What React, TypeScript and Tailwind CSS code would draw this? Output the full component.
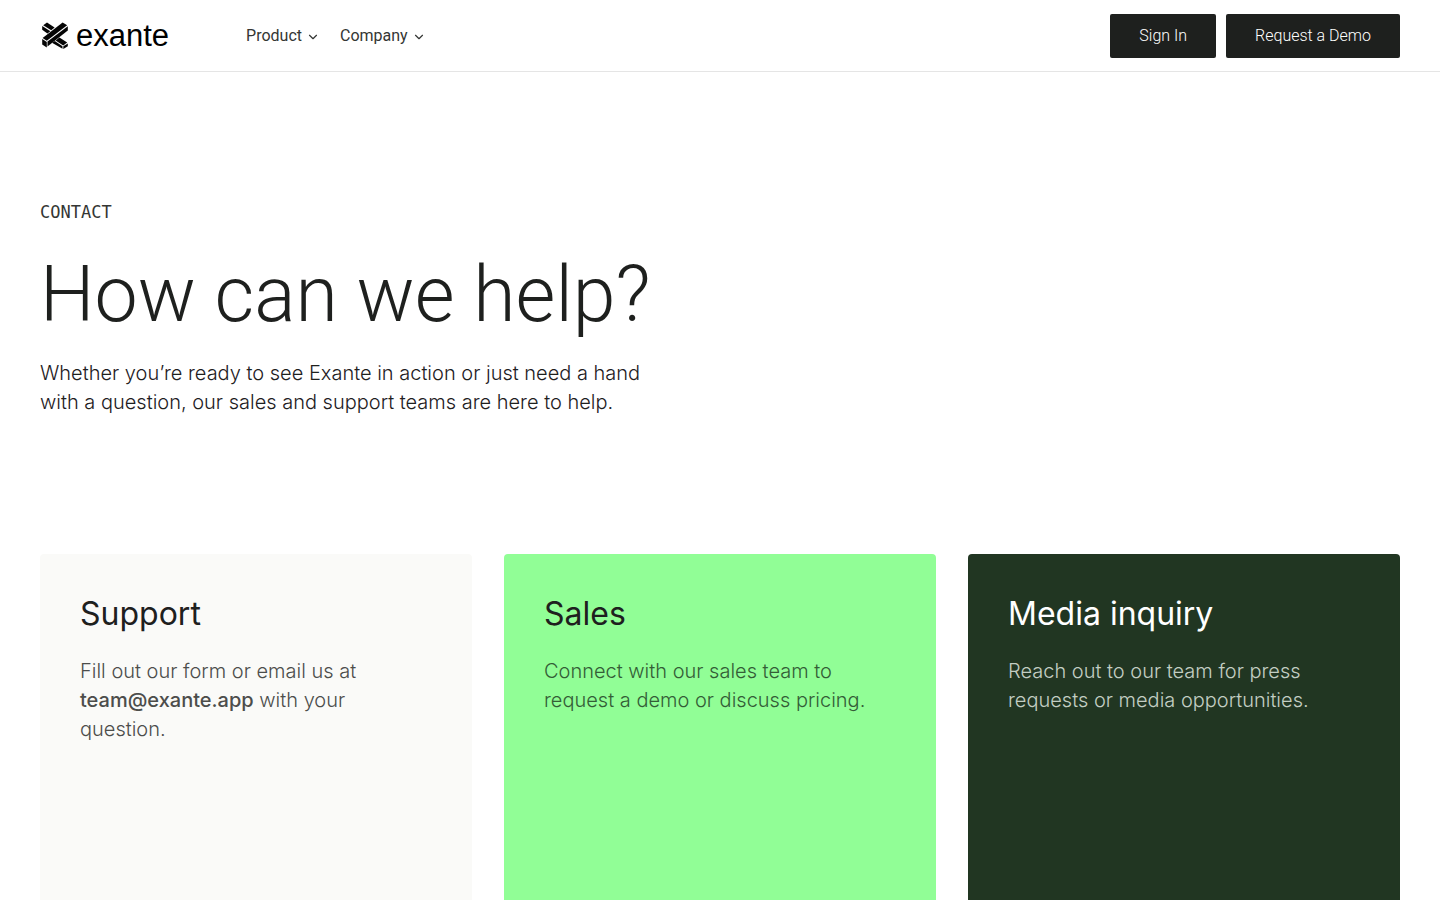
import { ChevronDown } from "lucide-react";
import type { ReactNode } from "react";

function LogoMark() {
  return (
    <svg viewBox="0 0 26 27" className="h-[27px] w-[26px]" aria-hidden="true">
      <g fill="#050505">
        <path d="M5 .6 12.6 5.6 9.2 8.2 1.2 3.2Z" />
        <path d="M.2 4 8.4 9.2 5.4 11.4.2 7.8Z" />
        <path d="M17.4 15.6 25.2 20.6 21.2 23.4 13.6 18.4Z" />
        <path d="M12.8 19 20.5 24.2 20.5 26.8 10 20.8Z" />
        <path d="M21.3 24.3 25.8 21.4 25.8 24.2 21.3 27Z" />
        <path d="M20.6.4 25.2 3.2 4.8 18.8.6 16Z" />
        <path d="M5.5 19.6 25.8 4.2 25.8 8.6 5.5 24.4Z" />
        <path d="M.2 17 4.8 20 4.8 25.4.2 22.4Z" />
      </g>
    </svg>
  );
}

function NavItem({ label }: { label: string }) {
  return (
    <button type="button" className="flex items-center gap-1 text-[16px] leading-6 text-[#343634]">
      {label}
      <ChevronDown className="mt-0.5 size-[14px]" strokeWidth={2} aria-hidden="true" />
    </button>
  );
}

function HeaderButton({ label }: { label: string }) {
  return (
    <a href="#" className="flex h-11 items-center rounded-xs bg-[#1e201e] px-[29px] text-[16px] font-light text-white">
      {label}
    </a>
  );
}

function Card({ title, tone, textTone, children }: { title: string; tone: string; textTone: string; children: ReactNode }) {
  return (
    <article className={`min-h-[480px] rounded p-10 ${tone}`}>
      <h2 className="font-['Inter',sans-serif] text-[32px] leading-10 font-normal">{title}</h2>
      <p className={`mt-[23px] font-['Inter',sans-serif] text-[20px] leading-[29px] font-light ${textTone}`}>{children}</p>
    </article>
  );
}

export default function App() {
  return (
    <div className="min-h-screen bg-white font-['Roboto',sans-serif] text-[#1e201e]">
      <header className="flex h-[72px] items-center justify-between border-b border-[#e5e5e5] px-10">
        <div className="flex items-center gap-[77px]">
          <a href="#" className="flex items-center gap-2 pl-0.5 text-black">
            <LogoMark />
            <span className="font-['Liberation_Sans',sans-serif] text-[31px] leading-9">exante</span>
          </a>
          <nav className="flex items-center gap-5">
            <NavItem label="Product" />
            <NavItem label="Company" />
          </nav>
        </div>
        <div className="flex gap-2.5">
          <HeaderButton label="Sign In" />
          <HeaderButton label="Request a Demo" />
        </div>
      </header>
      <main className="px-10">
        <section className="pt-32 pb-[137px]">
          <p className="font-['DejaVu_Sans_Mono',monospace] text-[17px] leading-6 text-[#343634]">CONTACT</p>
          <h1 className="mt-[26px] text-[77px] leading-[90px] font-light">How can we help?</h1>
          <p className="mt-[19px] max-w-[640px] font-['Inter',sans-serif] text-[20px] leading-[29px] font-light">
            Whether you’re ready to see Exante in action or just need a hand with a question, our sales and support
            teams are here to help.
          </p>
        </section>
        <section className="grid grid-cols-3 gap-8 pb-20">
          <Card title="Support" tone="bg-[#fafaf8]" textTone="text-[#4c4d4b]">
            Fill out our form or email us at{" "}
            <a href="mailto:team@exante.app" className="font-medium">
              team@exante.app
            </a>{" "}
            with your question.
          </Card>
          <Card title="Sales" tone="bg-[#91fe96]" textTone="text-[#345d36]">
            Connect with our sales team to request a demo or discuss pricing.
          </Card>
          <Card title="Media inquiry" tone="bg-[#213622] text-white" textTone="text-[#c3cec3]">
            Reach out to our team for press requests or media opportunities.
          </Card>
        </section>
      </main>
    </div>
  );
}
